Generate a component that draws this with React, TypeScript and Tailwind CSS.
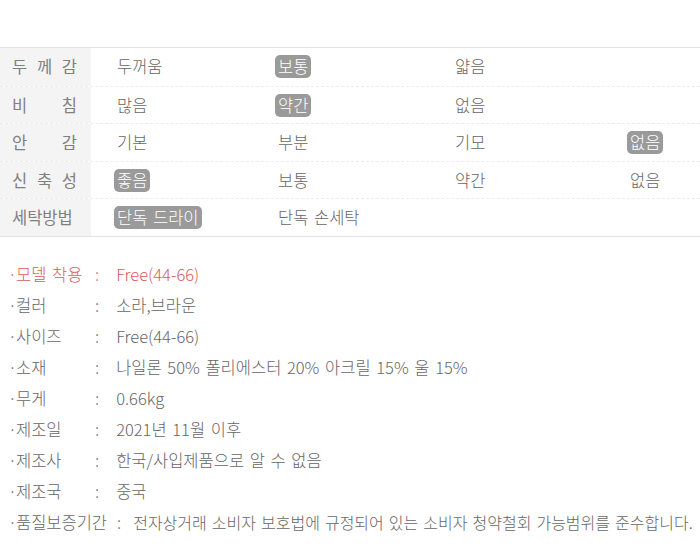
const FONT = { fontFamily: '"Noto Sans CJK KR", "Noto Sans", sans-serif' };

type Cell = { text: string; on?: boolean };

const ROWS: { label: string[]; cells: (Cell | null)[] }[] = [
  { label: ['두', '께', '감'], cells: [{ text: '두꺼움' }, { text: '보통', on: true }, { text: '얇음' }, null] },
  { label: ['비', '침'], cells: [{ text: '많음' }, { text: '약간', on: true }, { text: '없음' }, null] },
  { label: ['안', '감'], cells: [{ text: '기본' }, { text: '부분' }, { text: '기모' }, { text: '없음', on: true }] },
  { label: ['신', '축', '성'], cells: [{ text: '좋음', on: true }, { text: '보통' }, { text: '약간' }, { text: '없음' }] },
  { label: ['세탁방법'], cells: [{ text: '단독 드라이', on: true }, { text: '단독 손세탁' }, null, null] },
];

const INFO: [string, string][] = [
  ['컬러', '소라,브라운'],
  ['사이즈', 'Free(44-66)'],
  ['소재', '나일론 50% 폴리에스터 20% 아크릴 15% 울 15%'],
  ['무게', '0.66kg'],
  ['제조일', '2021년 11월 이후'],
  ['제조사', '한국/사입제품으로 알 수 없음'],
  ['제조국', '중국'],
];

function Dot() {
  return <span className="-mr-[1px]">·</span>;
}

export default function App() {
  return (
    <div className="w-[700px] h-[554px] bg-white overflow-hidden text-[#666] font-light" style={FONT}>
      <div className="h-[47px]" />

      {/* 소재 정보 표 */}
      <div className="border-t border-b border-[#e3e3e3]">
        {ROWS.map((row, i) => (
          <div
            key={i}
            className={`flex h-[37.6px] ${i > 0 ? 'border-t border-dashed border-[#ececec]' : ''}`}
          >
            <div className="w-[91px] shrink-0 bg-[#f4f4f4] flex items-center pl-[12px]">
              <div
                className={`w-[65px] flex text-[16.5px] font-normal text-[#808080] ${row.label.length > 1 ? 'justify-between' : ''}`}
              >
                {row.label.map(l => <span key={l}>{l}</span>)}
              </div>
            </div>
            <div className="flex-1 grid grid-cols-[161px_177px_175px_1fr] pl-[23px] items-center text-[16.5px]">
              {row.cells.map((c, j) => (
                <div key={j}>
                  {c && (
                    <span
                      className={`inline-block px-[3px] leading-[23px] rounded-[5px] [word-spacing:2px] ${
                        c.on ? 'bg-[#9a9a9a] text-white' : ''
                      }`}
                    >
                      {c.text}
                    </span>
                  )}
                </div>
              ))}
            </div>
          </div>
        ))}
      </div>

      {/* 상품 정보 */}
      <div className="pt-[22px] pl-[8px] text-[16.5px] leading-[31px] text-[#666]">
        <div className="flex text-[#dd5b5b] [word-spacing:2px]">
          <span className="w-[87px]"><Dot />모델 착용</span>
          <span>:</span>
          <span className="ml-[17px]">Free(44-66)</span>
        </div>
        {INFO.map(([k, v]) => (
          <div key={k} className="flex [word-spacing:2px]">
            <span className="w-[87px]"><Dot />{k}</span>
            <span>:</span>
            <span className="ml-[17px]">{v}</span>
          </div>
        ))}
        <div className="flex whitespace-nowrap">
          <span><Dot />품질보증기간</span>
          <span className="ml-[10px]">:</span>
          <span className="ml-[12px] text-[16px] [word-spacing:1.5px]">전자상거래 소비자 보호법에 규정되어 있는 소비자 청약철회 가능범위를 준수합니다.</span>
        </div>
      </div>
    </div>
  );
}
